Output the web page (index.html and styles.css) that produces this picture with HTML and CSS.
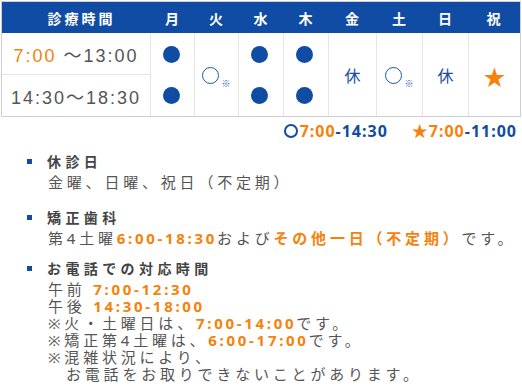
FILE: index.html
```html
<!DOCTYPE html>
<html lang="ja">
<head>
<meta charset="utf-8">
<title>診療時間</title>
<link rel="stylesheet" href="styles.css">
</head>
<body>
<div class="schedule">
  <div class="hd hd-time">診療時間</div>
  <div class="hd">月</div>
  <div class="hd">火</div>
  <div class="hd">水</div>
  <div class="hd">木</div>
  <div class="hd">金</div>
  <div class="hd">土</div>
  <div class="hd">日</div>
  <div class="hd hd-last">祝</div>

  <div class="time time-am"><span><span class="or">7:00</span> 〜13:00</span></div>
  <div class="day dots"><span class="dot"></span><span class="dot"></span></div>
  <div class="day"><span class="ring-wrap"><span class="ring"></span><span class="kome">※</span></span></div>
  <div class="day dots"><span class="dot"></span><span class="dot"></span></div>
  <div class="day dots"><span class="dot"></span><span class="dot"></span></div>
  <div class="day"><span class="closed">休</span></div>
  <div class="day"><span class="ring-wrap"><span class="ring"></span><span class="kome">※</span></span></div>
  <div class="day"><span class="closed">休</span></div>
  <div class="day day-last"><span class="star">★</span></div>
  <div class="time time-pm"><span>14:30〜18:30</span></div>
</div>

<div class="legend">
  <span class="legend-item"><span class="legend-ring"></span><span class="or">7:00</span>-14:30</span>
  <span class="legend-item"><span class="or">★7:00</span>-11:00</span>
</div>

<ul class="notes">
  <li class="note">
    <p class="note-title">休診日</p>
    <p class="note-body">金曜、日曜、祝日（不定期）</p>
  </li>
  <li class="note note-ortho">
    <p class="note-title">矯正歯科</p>
    <p class="note-body">第4土曜<span class="num">6:00-18:30</span>および<span class="hl">その他一日（不定期）</span>です。</p>
  </li>
  <li class="note note-phone">
    <p class="note-title">お電話での対応時間</p>
    <div class="note-body">
      <p>午前 <span class="num">7:00-12:30</span></p>
      <p>午後 <span class="num">14:30-18:00</span></p>
      <p>※火・土曜日は、<span class="num">7:00-14:00</span>です。</p>
      <p>※矯正第4土曜は、<span class="num">6:00-17:00</span>です。</p>
      <p>※混雑状況により、</p>
      <p class="indent">お電話をお取りできないことがあります。</p>
    </div>
  </li>
</ul>
</body>
</html>
```

FILE: styles.css
```css
* {
  box-sizing: border-box;
  margin: 0;
  padding: 0;
}

body {
  margin: 0;
  background: #fff;
  font-family: "Noto Sans", "Noto Sans CJK JP", sans-serif;
  color: #555;
}

.or {
  color: #f5820a;
}

/* schedule table */
.schedule {
  display: grid;
  grid-template-columns: 149px 44px 44px 45px 45px 48px 46px 46px 51px;
  grid-template-rows: 31px 42px 41px;
  width: 520px;
  margin: 1px 0 0 1px;
  border: 1px solid #cfcfcf;
}

.hd {
  background: #104ca4;
  color: #fff;
  font-family: "Noto Sans CJK JP", sans-serif;
  font-weight: bold;
  font-size: 14px;
  letter-spacing: 2px;
  display: flex;
  align-items: center;
  justify-content: center;
}

.hd-time {
  padding-left: 10px;
  letter-spacing: 3px;
}

.time {
  display: flex;
  align-items: center;
  justify-content: center;
  font-family: "Liberation Sans", "Noto Sans CJK JP", sans-serif;
  font-size: 18px;
  letter-spacing: 2px;
  color: #555;
  border-right: 1px solid #e6e6e6;
}

.time-am {
  border-bottom: 1px solid #e6e6e6;
}

.time-pm {
  grid-column: 1;
  grid-row: 3;
}

.day {
  grid-row: span 2;
  border-right: 1px solid #e6e6e6;
  display: flex;
  align-items: center;
  justify-content: center;
}

.day-last {
  border-right: 0;
}

.dots {
  display: grid;
  grid-template-rows: 42px 41px;
  place-items: center;
}

.dot {
  width: 17px;
  height: 17px;
  border-radius: 50%;
  background: #104ca4;
  margin-right: 3px;
}

.ring-wrap {
  display: flex;
  align-items: flex-end;
  margin-top: 2px;
}

.ring {
  width: 17px;
  height: 17px;
  border: 1.5px solid #1a55b0;
  border-radius: 50%;
}

.kome {
  font-family: "Noto Sans CJK JP", sans-serif;
  font-size: 9px;
  line-height: 9px;
  color: #1a55b0;
  margin-left: 2px;
  margin-bottom: -4px;
}

.closed {
  font-family: "Noto Sans CJK JP", sans-serif;
  font-size: 16px;
  color: #1a4fa0;
}

.star {
  font-family: "Noto Sans CJK JP", sans-serif;
  font-size: 22px;
  line-height: 1;
  color: #f5820a;
}

/* legend */
.legend {
  display: flex;
  justify-content: flex-end;
  gap: 24px;
  padding-right: 5px;
  margin-top: 4px;
  line-height: 20px;
  font-family: "Noto Sans", "Noto Sans CJK JP", sans-serif;
  font-weight: bold;
  font-size: 16px;
  letter-spacing: 1px;
  color: #104ca4;
}

.legend-item {
  display: flex;
  align-items: center;
}

.legend-ring {
  width: 14px;
  height: 14px;
  border: 2px solid #104ca4;
  border-radius: 50%;
  margin-right: 2px;
}

/* notes */
.notes {
  list-style: none;
  padding-left: 27px;
  margin-top: 9px;
}

.note-ortho {
  margin-top: 15px;
}

.note-phone {
  margin-top: 10px;
}

.note-title {
  display: flex;
  align-items: center;
  gap: 15px;
  font-family: "Noto Sans CJK JP", sans-serif;
  font-weight: bold;
  font-size: 14px;
  letter-spacing: 4.4px;
  line-height: 22px;
  color: #444;
}

.note-title::before {
  content: "";
  flex: none;
  width: 5px;
  height: 5px;
  background: #104ca4;
}

.note-body {
  padding-left: 21px;
  margin-top: 2px;
  font-size: 15px;
  letter-spacing: 3.8px;
  line-height: 17px;
  color: #555;
}

.num {
  color: #f5820a;
  font-weight: bold;
  letter-spacing: 2.7px;
}

.hl {
  color: #f5820a;
  font-weight: bold;
}

.indent {
  padding-left: 18px;
}
```
